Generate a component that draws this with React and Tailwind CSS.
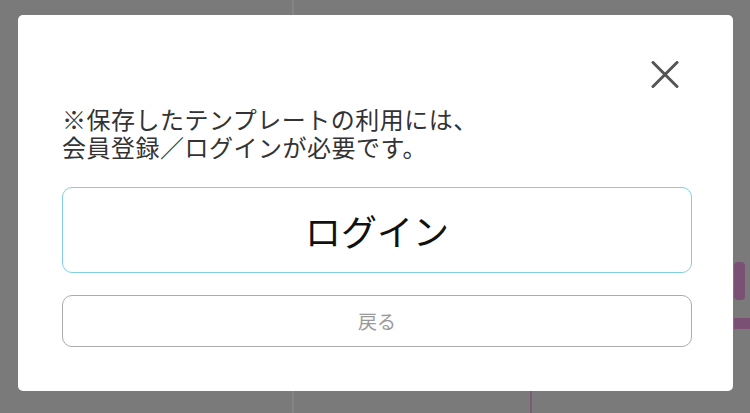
import React from 'react';

const CloseIcon = () => (
    <svg width="28" height="27" viewBox="0 0 28 27" fill="none">
        <path d="M2 1.5 L26 25.5 M26 1.5 L2 25.5" stroke="#555" strokeWidth="3" strokeLinecap="round" />
    </svg>
);

const App = () => {
    return (
        <div
            className="relative w-[750px] h-[413px] overflow-hidden bg-[#7a7a7a]"
            style={{ fontFamily: '"Noto Sans CJK JP", "Noto Sans", sans-serif' }}
        >
            {/* page behind the overlay, dimmed */}
            <div className="absolute left-[292px] top-0 w-[2px] h-[413px] bg-[#858585]" />
            <div className="absolute left-[530px] top-[391px] w-[2px] h-[22px] bg-[#7d5a78]" />
            <div className="absolute left-[734px] top-[262px] w-[11px] h-[38px] bg-[#7a5174] rounded-sm" />
            <div className="absolute left-[734px] top-[318px] w-[16px] h-[11px] bg-[#7a5174]" />

            {/* Dialog */}
            <div className="absolute left-[18px] top-[15px] w-[715px] h-[376px] bg-white rounded-[5px] pl-[44px] pr-[41px] flex flex-col">
                <div className="mt-[46px] h-[28px] flex justify-end pr-[13px]">
                    <button className="w-[28px] h-[27px] flex items-center justify-center">
                        <CloseIcon />
                    </button>
                </div>

                <div className="mt-[16px] text-[24px] leading-[28px] text-[#333] tracking-[0.5px]">
                    <div className="h-[28px] leading-[28px]">※保存したテンプレートの利用には、</div>
                    <div className="h-[28px] leading-[28px]">会員登録／ログインが必要です。</div>
                </div>

                <button className="mt-[26px] h-[86px] w-full rounded-[10px] border-[1.5px] border-[#82cfdf] bg-white text-[36px] text-[#111] flex items-center justify-center">
                    ログイン
                </button>

                <button className="mt-[22px] h-[52px] w-full rounded-[10px] border-[1.5px] border-[#ababab] bg-white text-[19px] text-[#9a9a9a] flex items-center justify-center">
                    戻る
                </button>
            </div>
        </div>
    );
};

export default App;
